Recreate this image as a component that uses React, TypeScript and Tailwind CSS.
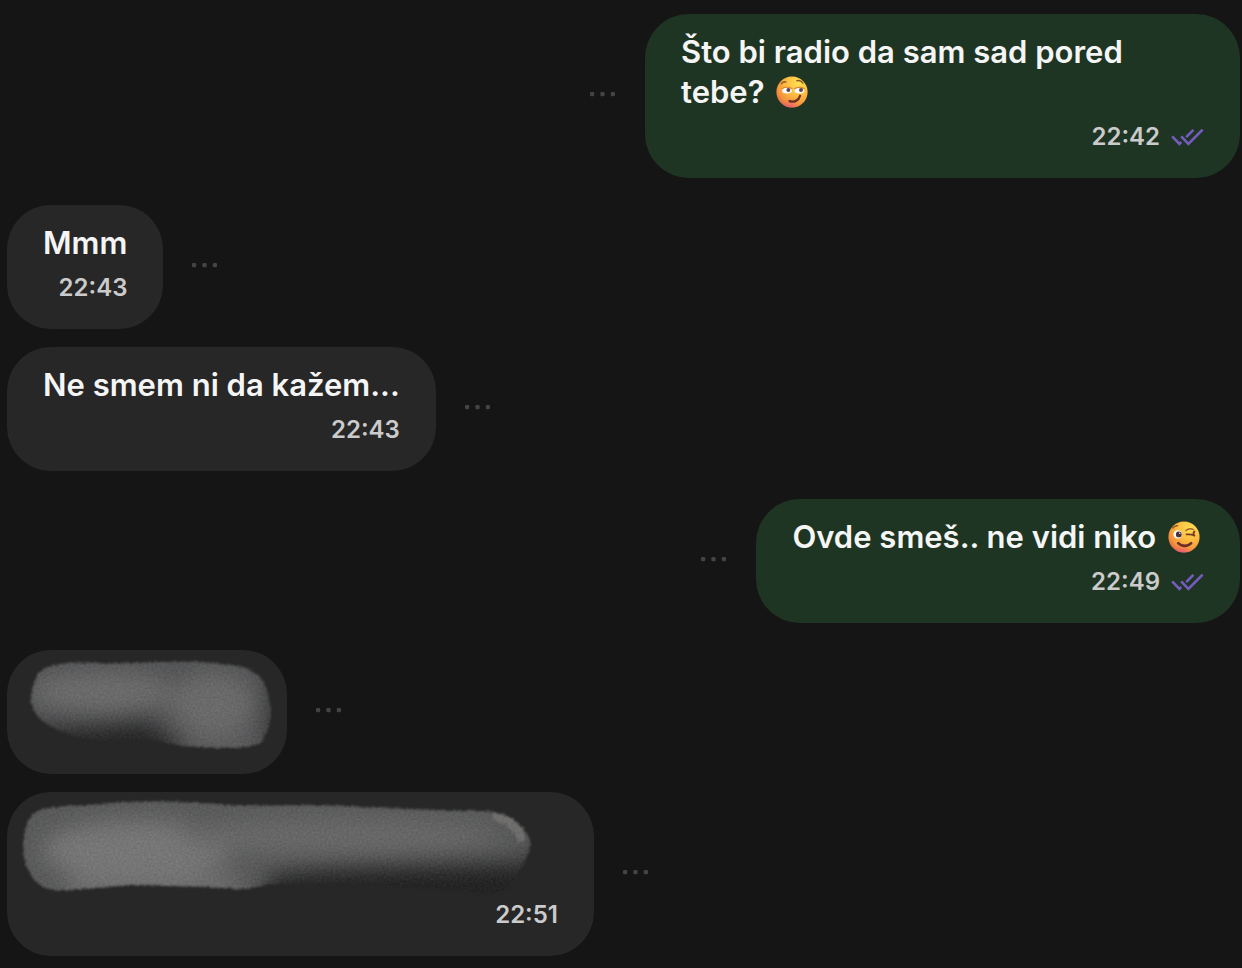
import React from "react";

type Mood = "smirk" | "wink";

function Emoji({ mood }: { mood: Mood }) {
  const id = `face-${mood}`;
  return (
    <svg
      viewBox="0 0 32 32"
      role="img"
      aria-label={mood}
      className="mx-1 inline-block size-8 align-[-5px]"
    >
      <defs>
        <radialGradient id={id} cx="0.7" cy="0.22" r="0.85">
          <stop offset="0" stopColor="#ffdf52" />
          <stop offset="0.5" stopColor="#fdb840" />
          <stop offset="0.82" stopColor="#f4923c" />
          <stop offset="1" stopColor="#dd6a48" />
        </radialGradient>
        <radialGradient id={`${id}-chin`} cx="0.42" cy="1.06" r="0.36">
          <stop offset="0" stopColor="#ee4f9c" stopOpacity="0.95" />
          <stop offset="1" stopColor="#f2704e" stopOpacity="0" />
        </radialGradient>
      </defs>
      <circle cx="16" cy="16" r="15.6" fill={`url(#${id})`} />
      <circle cx="16" cy="16" r="15.6" fill={`url(#${id}-chin)`} />
      {mood === "smirk" ? (
        <g fill="none" strokeLinecap="round">
          <ellipse cx="11" cy="14.6" rx="4.9" ry="2.9" fill="#fff" />
          <ellipse cx="23.4" cy="14.6" rx="4.9" ry="2.9" fill="#fff" />
          <path d="M6 12.6c3-1.6 7-1.6 10 0M18.6 12.6c3-1.6 6.6-1.6 9.6 0" stroke="#d98a3a" strokeWidth="1.2" />
          <ellipse cx="12.4" cy="14" rx="2" ry="2.1" fill="#5f4550" />
          <ellipse cx="25" cy="14" rx="2" ry="2.1" fill="#5f4550" />
          <path d="M5.5 7.6C6.5 6.2 8 5.7 9.8 5.9" stroke="#8f5427" strokeWidth="1.5" />
          <path d="M21 4.8c2.2-.6 4.6.3 5.9 2.3" stroke="#8f5427" strokeWidth="1.5" />
          <path d="M13.5 25.2c4.6 1.4 9.2-.4 10.6-5.4" stroke="#6b2f28" strokeWidth="2.3" />
        </g>
      ) : (
        <g fill="none" strokeLinecap="round">
          <ellipse cx="9.8" cy="13.4" rx="4.3" ry="4.2" fill="#fff" />
          <circle cx="10.8" cy="13.4" r="2.9" fill="#4b3038" />
          <circle cx="11.8" cy="12.2" r="0.7" fill="#fff" />
          <path d="M4.8 7C6 5.4 7.6 4.6 9.5 4.8" stroke="#8f5427" strokeWidth="1.4" />
          <path d="M17.8 9.6c2-1.8 4.8-2.3 7.4-1.2" stroke="#a4632a" strokeWidth="1.4" />
          <path d="M18.6 13.4c2.6-.2 5-.2 7.8 1.2M26.4 10.4c-1.2 1.6-1 3.2 0 4.2" stroke="#7d3f2a" strokeWidth="1.9" />
          <path d="M10.2 22.2c3.6 3.6 9.6 3.6 13 0" stroke="#6b2f28" strokeWidth="2.6" />
        </g>
      )}
    </svg>
  );
}

function ReadTicks() {
  return (
    <svg
      viewBox="0 0 33 18"
      role="img"
      aria-label="Read"
      className="h-[18px] w-[33px]"
      fill="none"
      stroke="#765cc0"
      strokeWidth="2.6"
    >
      <path d="M1.2 8.4l7.2 7.4 1.8-1.8M15.2 9.2L22.4 1.8" />
      <path d="M10.2 8.4l7.2 7.4L31.6 1.6" />
    </svg>
  );
}

function MenuButton() {
  return (
    <button type="button" aria-label="Message options" className="mb-1 shrink-0 text-[#444444]">
      <svg viewBox="0 0 28 8" className="h-2 w-7" fill="currentColor">
        <rect x="1" y="2" width="4.2" height="4.2" rx="1.2" />
        <rect x="11.4" y="2" width="4.2" height="4.2" rx="1.2" />
        <rect x="21.8" y="2" width="4.2" height="4.2" rx="1.2" />
      </svg>
    </button>
  );
}

interface BubbleProps {
  own?: boolean;
  time?: string;
  className?: string;
  children: React.ReactNode;
}

function Message({ own = false, time, className = "", children }: BubbleProps) {
  return (
    <li className={`flex items-center gap-7 ${own ? "flex-row-reverse" : ""} ${className}`}>
      <div
        className={`relative max-w-[595px] rounded-[44px] px-9 pt-[18px] pb-[22px] ${
          own ? "bg-[#1f3523]" : "bg-[#272727]"
        }`}
      >
        <div className="text-[31px] leading-10 font-semibold text-[#f5f5f5]">{children}</div>
        <div className="mt-1.5 flex h-[38px] items-center justify-end gap-[11px] text-2xl font-semibold text-[#cbcbcb]">
          {time && <time>{time}</time>}
          {own && <ReadTicks />}
        </div>
      </div>
      <MenuButton />
    </li>
  );
}

function Grain({ id }: { id: string }) {
  return (
    <>
      <filter id={`${id}-edge`} x="-5%" y="-10%" width="110%" height="120%">
        <feTurbulence type="fractalNoise" baseFrequency="0.4" numOctaves="2" seed="4" />
        <feDisplacementMap in="SourceGraphic" scale="5" xChannelSelector="R" yChannelSelector="G" />
        <feGaussianBlur stdDeviation="1" />
      </filter>
      <filter id={`${id}-noise`} x="0" y="0" width="100%" height="100%" colorInterpolationFilters="sRGB">
        <feTurbulence type="fractalNoise" baseFrequency="0.45" numOctaves="2" seed="9" />
        <feColorMatrix type="saturate" values="0.5" />
        <feComponentTransfer>
          <feFuncR type="linear" slope="1.5" intercept="-0.4" />
          <feFuncG type="linear" slope="1.5" intercept="-0.4" />
          <feFuncB type="linear" slope="1.5" intercept="-0.4" />
          <feFuncA type="linear" slope="0" intercept="0.09" />
        </feComponentTransfer>
      </filter>
      <filter
        id={`${id}-soft`}
        x="-50%"
        y="-50%"
        width="200%"
        height="200%"
        colorInterpolationFilters="sRGB"
      >
        <feGaussianBlur stdDeviation="11" />
      </filter>
    </>
  );
}

function ShortSmear() {
  return (
    <>
      <div className="h-10 w-52" />
      <svg viewBox="0 0 280 124" className="absolute top-0 left-0 h-[124px] w-[280px]" aria-hidden="true">
        <defs>
          <Grain id="short" />
          <mask id="short-mask">
            <path
              filter="url(#short-edge)"
              fill="#fff"
              d="M24 49C25 33 30 20 41 17C55 12 70 12 95 13C120 14 135 12 160 12C190 11 215 13 235 17C254 22 260 35 263 50C266 68 262 80 256 90C250 97 238 98 220 98L190 97C170 97 165 92 145 91L105 91C78 91 55 84 40 74C29 66 24 60 24 49Z"
            />
          </mask>
        </defs>
        <g mask="url(#short-mask)">
          <rect width="280" height="124" fill="#535455" />
          <g filter="url(#short-soft)">
            <ellipse cx="95" cy="42" rx="72" ry="20" fill="#6e6e6e" />
            <ellipse cx="206" cy="54" rx="42" ry="32" fill="#6c6c6c" />
            <ellipse cx="215" cy="92" rx="36" ry="8" fill="#606060" />
            <path d="M-20 74C40 82 90 78 140 72L175 98L140 140L-20 140Z" fill="#202020" />
            <path d="M264 20L290 20V110H260Z" fill="#303030" />
          </g>
          <rect width="280" height="124" filter="url(#short-noise)" />
        </g>
      </svg>
    </>
  );
}

function LongSmear() {
  return (
    <>
      <div className="h-20 w-[515px]" />
      <svg viewBox="0 0 587 124" className="absolute top-0 left-0 h-[124px] w-[587px]" aria-hidden="true">
        <defs>
          <Grain id="long" />
          <mask id="long-mask">
            <path
              filter="url(#long-edge)"
              fill="#fff"
              d="M16 54C17 37 20 23 33 18C48 13 70 14 95 12C130 8 170 9 210 12C250 15 300 12 340 14C380 16 420 18 460 19C492 18 504 23 513 33C520 40 523 46 523 52C522 65 514 76 508 88C500 99 490 102 475 101C440 97 400 95 350 92L265 92C250 94 245 98 230 97L200 95L125 93L60 98C35 99 28 91 22 80C18 72 16 63 16 54Z"
            />
          </mask>
        </defs>
        <g mask="url(#long-mask)">
          <rect width="587" height="124" fill="#595a5a" />
          <g filter="url(#long-soft)">
            <ellipse cx="130" cy="58" rx="95" ry="30" fill="#797979" />
            <ellipse cx="330" cy="44" rx="160" ry="18" fill="#6a6a6a" />
            <path d="M60 84H230V104H60Z" fill="#737373" />
            <path d="M262 84C320 74 420 76 524 70L540 150H250Z" fill="#1e1e1e" />
            <path d="M534 52L500 94L560 120Z" fill="#222222" />
          </g>
          <path
            d="M486 23C502 26 511 35 516 49"
            fill="none"
            stroke="#a09a94"
            strokeWidth="9"
            opacity="0.35"
            filter="url(#long-edge)"
          />
          <rect width="587" height="124" filter="url(#long-noise)" />
        </g>
      </svg>
    </>
  );
}

export default function App() {
  return (
    <main className="min-h-screen bg-[#151515] pt-[14px] pr-[2px] pb-3 pl-[7px] font-['Inter',sans-serif]">
      <ul className="flex flex-col">
        <Message own time="22:42">
          Što bi radio da sam sad pored tebe? <Emoji mood="smirk" />
        </Message>
        <Message time="22:43" className="mt-[27px]">
          Mmm
        </Message>
        <Message time="22:43" className="mt-[18px]">
          Ne smem ni da kažem...
        </Message>
        <Message own time="22:49" className="mt-7">
          Ovde smeš.. ne vidi niko <Emoji mood="wink" />
        </Message>
        <Message className="mt-[27px]">
          <ShortSmear />
        </Message>
        <Message time="22:51" className="mt-[18px]">
          <LongSmear />
        </Message>
      </ul>
    </main>
  );
}
